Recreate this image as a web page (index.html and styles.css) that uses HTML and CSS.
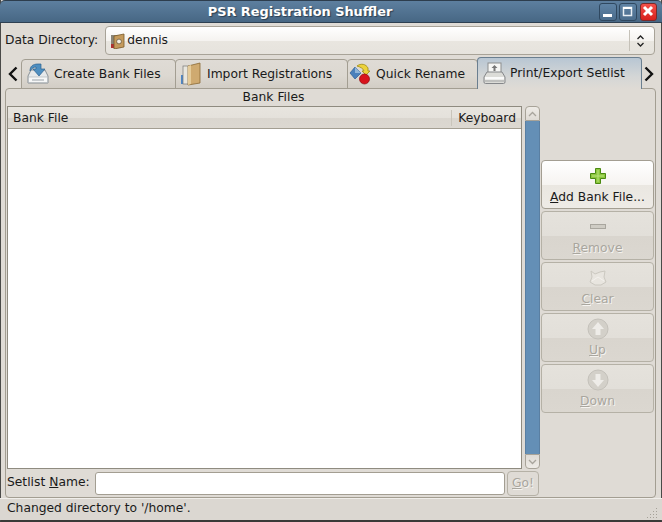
FILE: index.html
```html
<!DOCTYPE html>
<html lang="en">
<head>
<meta charset="utf-8">
<title>PSR Registration Shuffler</title>
<link rel="stylesheet" href="styles.css">
</head>
<body>
<div class="window">
  <header class="titlebar">
    <div class="title">PSR Registration Shuffler</div>
    <div class="wm-buttons">
      <div class="wm-btn"><svg width="18" height="18" viewBox="0 0 18 18"><rect x="4" y="11" width="9" height="3" fill="#fff"/></svg></div>
      <div class="wm-btn"><svg width="18" height="18" viewBox="0 0 18 18"><rect x="4.500" y="4.500" width="8" height="8" fill="none" stroke="#e8eef4" stroke-width="1.500"/><rect x="4" y="4" width="9" height="2" fill="#fff"/></svg></div>
      <div class="wm-btn wm-close"><svg width="18" height="18" viewBox="0 0 18 18"><path d="M4 4l8 8M12 4l-8 8" stroke="#fff" stroke-width="3" fill="none"/></svg></div>
    </div>
  </header>
  <div class="dir-row">
    <span class="label dir-label">Data Directory:</span>
    <div class="combo">
      <svg class="folder-icon" width="16" height="16" viewBox="0 0 16 16"><rect x="1" y="2" width="10" height="13" fill="#8a8578"/><rect x="1" y="11" width="3" height="4" fill="#b03030"/><path d="M4 3l10-2v13l-10 2z" fill="#c49a5c" stroke="#7a5a2a" stroke-width=".8"/><circle cx="9" cy="8.500" r="2.400" fill="#f4f0e4" stroke="#5a4a30" stroke-width=".7"/></svg>
      <span class="combo-text">dennis</span>
      <span class="combo-sep"></span>
      <svg class="combo-arrows" width="9" height="14" viewBox="0 0 9 14"><path d="M1.500 5l3-3 3 3M1.500 9l3 3 3-3" fill="none" stroke="#222" stroke-width="1.300"/></svg>
    </div>
  </div>
  <div class="tabs">
    <svg class="tab-arrow" width="12" height="16" viewBox="0 0 12 16"><path d="M9.500 1.500L3 8l6.500 6.500" fill="none" stroke="#111" stroke-width="2.400"/></svg>
    <div class="tab tab-1">
      <svg width="24" height="24" viewBox="0 0 24 24"><path d="M2 14l3-6h14l3 6v7H2z" fill="#e6e9ea" stroke="#8a9298"/><rect x="2.500" y="15" width="19" height="5.500" fill="#f6f7f7" stroke="#a8aeb2" stroke-width=".6"/><path d="M6 18h12" stroke="#9aa2a8"/><path d="M4 9c0-5 3-7 8-7h3v5h4l-6 7-6-7h3V5c-2 0-4 1-6 4z" fill="#4f8fc0" stroke="#2d6290" stroke-width=".7"/></svg>
      <span>Create Bank Files</span>
    </div>
    <div class="tab tab-2">
      <svg width="24" height="24" viewBox="0 0 24 24"><rect x="2" y="13" width="5" height="9" fill="#4d86c6"/><rect x="4" y="4" width="7" height="18" fill="#e8e6de" stroke="#777" stroke-width=".7"/><path d="M9 4l12-3v20l-12 2z" fill="#cfaa70" stroke="#8a6a35" stroke-width=".8"/><path d="M9 4l3-1v19l-3 1z" fill="#e4cb9a"/></svg>
      <span>Import Registrations</span>
    </div>
    <div class="tab tab-3">
      <svg width="24" height="24" viewBox="0 0 24 24"><path d="M7 5l6 6-6 6-5-6z" fill="#4a80bb" stroke="#2c5c92" stroke-width=".7"/><path d="M7 5l6 6H7z" fill="#8fb4d8"/><path d="M9 4c4-3 9-2 11 2v3h2l-4 4-4-4h2c-1-3-4-4-7-5z" fill="#ecd23c" stroke="#a08a10" stroke-width=".8"/><circle cx="16.500" cy="17" r="5" fill="#d8131c" stroke="#8c0c10" stroke-width=".7"/></svg>
      <span>Quick Rename</span>
    </div>
    <div class="tab tab-active">
      <svg width="24" height="24" viewBox="0 0 24 24"><rect x="6" y="2" width="13" height="11" fill="#f6f6f4" stroke="#8b8d8d"/><path d="M12.500 4l3 3h-2v3h-2V7h-2z" fill="#777"/><path d="M5 11h15l3 5v5a1.500 1.500 0 0 1-1.500 1.500h-18A1.500 1.500 0 0 1 2 21v-5z" fill="#dcdcd8" stroke="#85878a"/><rect x="3" y="16" width="19" height="2.500" fill="#fafafa"/><path d="M3 20h19" stroke="#a2a4a4"/></svg>
      <span>Print/Export Setlist</span>
    </div>
    <svg class="tab-arrow tab-arrow-right" width="12" height="16" viewBox="0 0 12 16"><path d="M2.500 1.500L9 8l-6.500 6.500" fill="none" stroke="#111" stroke-width="2.400"/></svg>
  </div>
  <main class="panel">
    <div class="content">
      <div class="list-column">
        <div class="section-title">Bank Files</div>
        <div class="list-area">
          <div class="tree">
            <div class="tree-head">
              <div class="col col-file">Bank File</div>
              <div class="col col-key">Keyboard</div>
            </div>
            <div class="tree-body"></div>
          </div>
          <div class="scrollbar">
            <div class="sb-btn sb-up"><svg width="9" height="6" viewBox="0 0 9 6"><path d="M1 5l3.500-3.500L8 5" fill="none" stroke="#a8a49c" stroke-width="1.300"/></svg></div>
            <div class="sb-thumb"></div>
            <div class="sb-btn sb-down"><svg width="9" height="6" viewBox="0 0 9 6"><path d="M1 1l3.500 3.500L8 1" fill="none" stroke="#a8a49c" stroke-width="1.300"/></svg></div>
          </div>
        </div>
        <div class="name-row">
          <span class="label">Setlist <u>N</u>ame:</span>
          <div class="entry"></div>
          <div class="go-btn"><u>G</u>o!</div>
        </div>
      </div>
      <div class="actions">
        <div class="action action-on">
          <svg width="20" height="20" viewBox="0 0 20 20"><path d="M7.500 2.500h5v5h5v5h-5v5h-5v-5h-5v-5h5z" fill="#8cc63e" stroke="#4b8a12"/><path d="M10 4v12M4 10h12" stroke="#b9e47c" stroke-width="1"/></svg>
          <span><u>A</u>dd Bank File...</span>
        </div>
        <div class="action">
          <svg width="20" height="20" viewBox="0 0 20 20"><rect x="2.500" y="7.500" width="15" height="4" fill="#cfccc4" stroke="#a9a69e"/></svg>
          <span><u>R</u>emove</span>
        </div>
        <div class="action">
          <svg width="20" height="20" viewBox="0 0 20 20"><path d="M3 3l4 3 5-2 5-1-1 6 2 5-5 3H7l-5-3 2-5z" fill="#e8e5df" stroke="#cbc8c0"/><path d="M4 13l6-4 6 4" fill="none" stroke="#f4f2ee"/></svg>
          <span><u>C</u>lear</span>
        </div>
        <div class="action action-round">
          <svg width="22" height="22" viewBox="0 0 22 22"><circle cx="11" cy="11" r="10" fill="#d3d0c9" stroke="#c4c1ba"/><path d="M11 4l6 7h-3.500v6h-5v-6H5z" fill="#eeece8"/></svg>
          <span><u>U</u>p</span>
        </div>
        <div class="action action-round">
          <svg width="22" height="22" viewBox="0 0 22 22"><circle cx="11" cy="11" r="10" fill="#d3d0c9" stroke="#c4c1ba"/><path d="M11 18l6-7h-3.500V5h-5v6H5z" fill="#eeece8"/></svg>
          <span><u>D</u>own</span>
        </div>
      </div>
    </div>
  </main>
  <footer class="statusbar">
    <span class="status-text">Changed directory to '/home'.</span>
    <svg class="grip" width="12" height="12" viewBox="0 0 12 12"><g fill="#a5a198"><rect x="9" y="1" width="1" height="1"/><rect x="6" y="4" width="1" height="1"/><rect x="9" y="4" width="1" height="1"/><rect x="3" y="7" width="1" height="1"/><rect x="6" y="7" width="1" height="1"/><rect x="9" y="7" width="1" height="1"/><rect x="0" y="10" width="1" height="1"/><rect x="3" y="10" width="1" height="1"/><rect x="6" y="10" width="1" height="1"/><rect x="9" y="10" width="1" height="1"/></g></svg>
  </footer>
</div>
</body>
</html>
```

FILE: styles.css
```css
* { box-sizing: border-box; }
html, body { margin: 0; padding: 0; }
body {
  width: 662px;
  height: 522px;
  overflow: hidden;
  background: #dcd8d2;
  font-family: "DejaVu Sans", sans-serif;
  font-size: 12.3px;
  line-height: 16px;
  color: #1a1a1a;
}
.window {
  width: 662px;
  height: 522px;
  display: flex;
  flex-direction: column;
  border-left: 1px solid #4a4a48;
  border-right: 1px solid #4a4a48;
  border-bottom: 2px solid #3a3a38;
  background: #dfdbd5;
}
.titlebar {
  height: 23px;
  margin: 0 -1px;
  flex: none;
  display: flex;
  align-items: center;
  justify-content: center;
  padding-right: 62px;
  position: relative;
  background: linear-gradient(#5d7f9f, #476784);
  border-top: 1px solid #2d3d4d;
  border-bottom: 1px solid #2e4052;
  border-radius: 5px 5px 0 0;
}
.title {
  color: #fff;
  font-weight: bold;
  font-size: 12.9px;
  text-shadow: 1px 1px 1px #2b3e50;
}
.wm-buttons {
  position: absolute;
  right: 5px;
  top: 2px;
  display: flex;
  gap: 2px;
}
.wm-buttons .wm-close { margin-left: 1px; }
.wm-btn {
  width: 18px;
  height: 18px;
  border: 1px solid #2f4860;
  border-radius: 3px;
  background: linear-gradient(#5f83a5, #4a6c8c);
  display: flex;
  align-items: center;
  justify-content: center;
  overflow: hidden;
}
.wm-btn svg { flex: none; }
.wm-close {
  width: 17px;
  background: linear-gradient(#f2504a, #d8201c);
  border-color: #7a2a2a;
}
.dir-row {
  flex: none;
  height: 29px;
  margin-top: 3px;
  padding: 0 6px 0 4px;
  display: flex;
  align-items: center;
  gap: 7px;
}
.dir-label { padding-bottom: 2px; }
.combo {
  flex: 1;
  height: 29px;
  display: flex;
  align-items: center;
  padding: 0 9px 0 4px;
  border: 1px solid #a8a398;
  border-radius: 4px;
  background: linear-gradient(#ffffff 0, #f5f3f0 50%, #e9e6e0 52%, #e6e3dd 100%);
}
.folder-icon { margin-right: 1px; flex: none; }
.combo-text { flex: 1; padding-bottom: 2px; }
.combo-sep {
  width: 1px;
  height: 21px;
  background: #c5c1b8;
  margin-right: 6px;
}
.tabs {
  flex: none;
  height: 31px;
  margin-top: 3px;
  display: flex;
  align-items: flex-end;
  padding-left: 6px;
  position: relative;
  z-index: 1;
}
.tab-arrow {
  flex: none;
  align-self: center;
}
.tab {
  height: 30px;
  display: flex;
  align-items: center;
  gap: 4px;
  padding: 0 0 0 4px;
  border: 1px solid #a39e92;
  border-radius: 4px 4px 0 0;
  background: linear-gradient(#dfdbd5 0, #dcd8d1 55%, #d2cdc5 100%);
  margin-right: -1px;
  flex: none;
}
.tab svg { flex: none; }
.tab-1 { width: 155px; margin-left: 2px; }
.tab-2 { width: 173px; padding-left: 3px; }
.tab-3 { width: 131px; padding-left: 0; }
.tab-active {
  width: 165px;
  height: 32px;
  padding: 0 0 2px 4px;
  border-color: #6b7f90;
  border-bottom: none;
  background: linear-gradient(#b8c6d3 0, #d4d6d6 60%, #dfdbd5 100%);
  margin-right: 1px;
}
.panel {
  flex: none;
  height: 410px;
  margin: -1px 5px 0 4px;
  border: 1px solid #a39e92;
  border-radius: 4px;
  padding: 0 1px;
  background: #dfdbd5;
}
.content {
  display: flex;
  height: 100%;
}
.list-column {
  width: 533px;
  flex: none;
  display: flex;
  flex-direction: column;
}
.section-title {
  height: 17px;
  flex: none;
  text-align: center;
  line-height: 17px;
}
.list-area {
  height: 363px;
  flex: none;
  display: flex;
  gap: 3px;
}
.tree {
  width: 515px;
  flex: none;
  border: 1px solid #8f8b80;
  display: flex;
  flex-direction: column;
  background: #fff;
}
.tree-head {
  height: 22px;
  flex: none;
  display: flex;
  background: linear-gradient(#e8e5df 0, #e4e1db 50%, #dad6cf 52%, #dcd8d1 100%);
  border-bottom: 1px solid #a39e92;
  align-items: center;
}
.col { padding: 0 5px; }
.col-file { flex: 1; }
.col-key {
  border-left: 1px solid #c9c5bb;
  height: 16px;
  padding: 0 5px 0 6px;
  white-space: nowrap;
}
.tree-body { flex: 1; background: #fff; }
.scrollbar {
  width: 15px;
  flex: none;
  display: flex;
  flex-direction: column;
}
.sb-btn {
  height: 15px;
  flex: none;
  border: 1px solid #a8a398;
  background: linear-gradient(#eeebe6, #dfdbd5);
  display: flex;
  align-items: center;
  justify-content: center;
}
.sb-up { border-radius: 4px 4px 0 0; }
.sb-down { border-radius: 0 0 4px 4px; background: linear-gradient(#dfdbd5, #eeebe6); }
.sb-thumb {
  flex: 1;
  background: #648fb6;
  border-left: 1px solid #5a7fa2;
  border-right: 1px solid #5a7fa2;
}
.name-row {
  flex: none;
  height: 28px;
  display: flex;
  align-items: center;
}
.name-row .label { width: 88px; flex: none; padding-bottom: 2px; }
.entry {
  width: 410px;
  height: 23px;
  flex: none;
  background: #fff;
  border: 1px solid #a39e92;
  border-radius: 3px;
}
.go-btn {
  width: 32px;
  height: 25px;
  margin-left: 2px;
  flex: none;
  border: 1px solid #b5b1a6;
  border-radius: 4px;
  background: #dfdbd5;
  color: #a9a69e;
  text-shadow: 1px 1px 0 #f5f3f0;
  display: flex;
  align-items: center;
  justify-content: center;
  white-space: pre;
}
.actions {
  width: 113px;
  flex: none;
  margin-left: 1px;
  padding-top: 71px;
  display: flex;
  flex-direction: column;
  gap: 2px;
}
.action {
  height: 49px;
  flex: none;
  border: 1px solid #b5b1a6;
  border-radius: 4px;
  background: linear-gradient(#e5e2dc 0, #e2dfd9 50%, #d9d5ce 52%, #dbd7d0 100%);
  color: #a9a69e;
  text-shadow: 1px 1px 0 #f5f3f0;
  display: flex;
  flex-direction: column;
  align-items: center;
  padding-top: 5px;
}
.action svg { flex: none; }
.action span { margin-top: 3px; }
.action-round svg { margin: -1px 0; }
.action-on {
  border-color: #a39e92;
  color: #1a1a1a;
  text-shadow: none;
  background: linear-gradient(#ffffff 0, #f6f4f1 50%, #eae7e1 52%, #eeebe6 100%);
}
.statusbar {
  flex: 1;
  display: flex;
  align-items: center;
  justify-content: space-between;
  margin: 0 -1px;
  padding: 0 3px 0 7px;
  border-top: 1px solid #f0eeea;
  background: #dbd7d1;
}
.status-text { padding-bottom: 3px; }
.grip { align-self: flex-end; margin-bottom: 1px; }
```
